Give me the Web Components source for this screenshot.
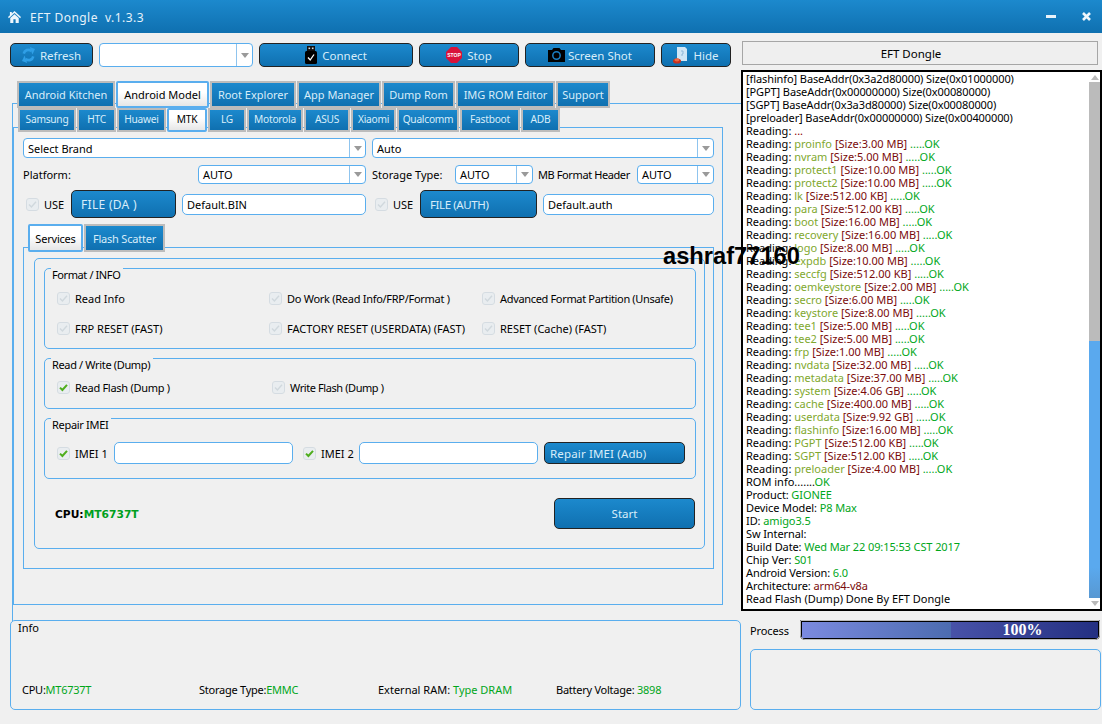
<!DOCTYPE html>
<html>
<head>
<meta charset="utf-8">
<title>EFT Dongle</title>
<style>
  html, body { margin: 0; padding: 0; background: #f0f0f0; }
  body { width: 1102px; height: 724px; overflow: hidden; font: 11px "Noto Sans", "Liberation Sans", sans-serif; color: #000; }
</style>
</head>
<body>
<eft-app></eft-app>
<script>
const BLUE = "#5aaeee";
const GRAD = "linear-gradient(#1c89cd, #0f70b0)";

class EftTitlebar extends HTMLElement {
  constructor() {
    super();
    this.attachShadow({ mode: "open" }).innerHTML = `
      <style>
        :host { display: flex; align-items: center; height: 33px; background: ${GRAD}; color: #e6f2fb; box-sizing: border-box; padding: 0 11px 0 8px; font-size: 12px; letter-spacing: .45px; }
        svg { display: block; }
        .title { margin: 2px 0 0 9px; flex: 1; white-space: pre; }
        .min { width: 10px; height: 3px; background: #e8f2fa; margin-right: 26px; margin-top: -1px; }
      </style>
      <svg width="13" height="12" viewBox="0 0 15 13" preserveAspectRatio="none"><path fill="#eef6fc" d="M7.5 0 L15 6.6 L14 7.8 L7.5 2.2 L1 7.8 L0 6.6 L2.2 4.7 V1 H4.4 V2.8 Z M2.6 7.6 L7.5 3.4 L12.4 7.6 V13 H8.8 V9 H6.2 V13 H2.6 Z"/></svg>
      <span class="title">EFT Dongle  v.1.3.3</span>
      <span class="min"></span>
      <svg width="9" height="9" viewBox="0 0 9 9"><path stroke="#eef6fc" stroke-width="2.6" d="M1 1 L8 8 M8 1 L1 8"/></svg>
    `;
  }
}

class EftButton extends HTMLElement {
  constructor() {
    super();
    const w = this.getAttribute("w");
    const h = this.getAttribute("h") || 24;
    const align = this.getAttribute("align") || "center";
    const pad = this.getAttribute("pad") || 0;
    const size = this.getAttribute("size") || 11.5;
    this.attachShadow({ mode: "open" }).innerHTML = `
      <style>
        :host { display: flex; align-items: center; justify-content: ${align}; gap: 5px; flex: none; width: ${w}px; height: ${h}px; box-sizing: border-box; padding-left: ${pad}px; border: 1px solid #222; border-radius: 5px; background: ${GRAD}; color: #d8edfa; font-size: ${size}px; }
        span { white-space: nowrap; }
      </style>
      <slot name="icon"></slot><span><slot></slot></span>
    `;
  }
}

class EftCombo extends HTMLElement {
  constructor() {
    super();
    const w = this.getAttribute("w");
    const h = this.getAttribute("h") || 20;
    this.attachShadow({ mode: "open" }).innerHTML = `
      <style>
        :host { display: flex; flex: none; width: ${w}px; height: ${h}px; box-sizing: border-box; border: 1px solid ${BLUE}; border-radius: 4px; background: #fff; }
        .text { flex: 1; padding-left: 4px; align-self: center; }
        .drop { width: 15px; border-left: 1px solid #8fc4ee; display: flex; align-items: center; justify-content: center; }
        .drop i { width: 0; height: 0; border: 4px solid transparent; border-top: 5px solid #9a9a9a; border-bottom: 0; }
      </style>
      <span class="text"><slot></slot></span>
      <span class="drop"><i></i></span>
    `;
  }
}

class EftInput extends HTMLElement {
  constructor() {
    super();
    const w = this.getAttribute("w");
    const h = this.getAttribute("h") || 21;
    this.attachShadow({ mode: "open" }).innerHTML = `
      <style>
        :host { display: flex; align-items: center; flex: none; width: ${w}px; height: ${h}px; box-sizing: border-box; padding-left: 4px; border: 1px solid ${BLUE}; border-radius: 5px; background: #fff; }
      </style>
      <span><slot></slot></span>
    `;
  }
}

class EftCheck extends HTMLElement {
  constructor() {
    super();
    const on = this.hasAttribute("checked");
    const w = this.getAttribute("w");
    const gap = this.getAttribute("gap") || 5;
    this.attachShadow({ mode: "open" }).innerHTML = `
      <style>
        :host { display: flex; align-items: center; gap: ${gap}px; ${w ? `width: ${w}px; flex: none;` : ""} }
        svg { display: block; flex: none; }
        span { white-space: nowrap; }
      </style>
      <svg width="13" height="13" viewBox="0 0 13 13">
        <rect x=".5" y=".5" width="12" height="12" rx="2.5" fill="#e9edf0" stroke="#d5dce2"/>
        <path d="M3 6.6 L5.4 9 L10 3.8" fill="none" stroke="${on ? "#4fae1e" : "#d0d8dd"}" stroke-width="${on ? 2 : 1.4}"/>
      </svg>
      <span><slot></slot></span>
    `;
  }
}

class EftTab extends HTMLElement {
  constructor() {
    super();
    const w = this.getAttribute("w");
    this.attachShadow({ mode: "open" }).innerHTML = `
      <style>
        :host { display: flex; align-items: center; justify-content: center; flex: none; width: ${w}px; box-sizing: border-box; border: 2px solid #bcbcbc; background: ${GRAD}; color: #d8edfa; }
        :host([active]) { border-color: ${BLUE}; background: linear-gradient(#fff 40%, #e6e6e6); color: #000; border-radius: 2px; }
        span { white-space: nowrap; }
      </style>
      <span><slot></slot></span>
    `;
  }
}

class EftTabBar extends HTMLElement {
  constructor() {
    super();
    const h = this.getAttribute("h");
    const left = this.getAttribute("left");
    this.attachShadow({ mode: "open" }).innerHTML = `
      <style>
        :host { display: flex; gap: 1px; height: ${h}px; margin-left: ${left}px; margin-bottom: -5px; position: relative; z-index: 1; }
      </style>
      <slot></slot>
    `;
  }
}

class EftGroup extends HTMLElement {
  constructor() {
    super();
    const h = this.getAttribute("h");
    const sp = this.getAttribute("sp") || "-.3";
    this.attachShadow({ mode: "open" }).innerHTML = `
      <style>
        :host { display: block; position: relative; height: ${h}px; box-sizing: border-box; border: 1px solid ${BLUE}; border-radius: 5px; }
        .title { position: absolute; left: 6px; top: -1px; padding: 0 3px 0 1px; line-height: 13px; background: #f0f0f0; letter-spacing: ${sp}px; }
      </style>
      <span class="title">${this.getAttribute("title")}</span>
      <slot></slot>
    `;
  }
}

class EftLog extends HTMLElement {
  constructor() {
    super();
    const parts = [
      ["proinfo", "3.00 MB"], ["nvram", "5.00 MB"], ["protect1", "10.00 MB"], ["protect2", "10.00 MB"],
      ["lk", "512.00 KB"], ["para", "512.00 KB"], ["boot", "16.00 MB"], ["recovery", "16.00 MB"],
      ["logo", "8.00 MB"], ["expdb", "10.00 MB"], ["seccfg", "512.00 KB"], ["oemkeystore", "2.00 MB"],
      ["secro", "6.00 MB"], ["keystore", "8.00 MB"], ["tee1", "5.00 MB"], ["tee2", "5.00 MB"],
      ["frp", "1.00 MB"], ["nvdata", "32.00 MB"], ["metadata", "37.00 MB"], ["system", "4.06 GB"],
      ["cache", "400.00 MB"], ["userdata", "9.92 GB"], ["flashinfo", "16.00 MB"], ["PGPT", "512.00 KB"],
      ["SGPT", "512.00 KB"], ["preloader", "4.00 MB"],
    ];
    const reading = parts.map(([name, size]) =>
      `<div>Reading: <b class="n">${name}</b> <b class="s">[Size:${size}]</b> <b class="g">.....OK</b></div>`).join("");
    const info = [
      ["Product: ", "GIONEE"], ["Device Model: ", "P8 Max"], ["ID: ", "amigo3.5"], ["Sw Internal:", ""],
      ["Build Date: ", "Wed Mar 22 09:15:53 CST 2017"], ["Chip Ver: ", "S01"], ["Android Version: ", "6.0"],
    ].map(([k, v]) => `<div class="t">${k}<b class="g">${v}</b></div>`).join("");
    this.attachShadow({ mode: "open" }).innerHTML = `
      <style>
        :host { display: flex; height: 541px; box-sizing: border-box; border: 2px solid #000; background: #fff; }
        .text { flex: 1; padding: 0 0 0 3px; line-height: 13px; white-space: pre; overflow: hidden; }
        .t { letter-spacing: -.1px; }
        b { font-weight: normal; }
        .n { color: #7fa82e; }
        .s { color: #7a0a0a; }
        .g { color: #00a61a; }
        .r { color: #8a0000; }
        .bar { width: 11px; display: flex; flex-direction: column; align-items: center; }
        .bar i.up, .bar i.down { width: 0; height: 0; border: 4px solid transparent; flex: none; }
        .bar i.up { border-bottom: 5px solid #b9b9b9; border-top: 0; margin: 3px 0 2px; }
        .bar i.down { border-top: 5px solid #b9b9b9; border-bottom: 0; margin: 3px 0 2px; }
        .gray { height: 259px; width: 100%; background: #bbbbbb; flex: none; }
        .thumb { height: 257px; width: 100%; background: linear-gradient(#5aa9ee, #5aa9ee 88%, #5898d2); flex: none; }
      </style>
      <div class="text"><div class="t">[flashinfo] BaseAddr(0x3a2d80000) Size(0x01000000)</div><div class="t">[PGPT] BaseAddr(0x00000000) Size(0x00080000)</div><div class="t">[SGPT] BaseAddr(0x3a3d80000) Size(0x00080000)</div><div class="t">[preloader] BaseAddr(0x00000000) Size(0x00400000)</div><div>Reading: <b class="r">...</b></div>${reading}<div>ROM info.......<b class="g">OK</b></div>${info}<div class="t">Architecture: <b class="s">arm64-v8a</b></div><div>Read Flash (Dump) Done By EFT Dongle</div></div>
      <div class="bar"><i class="up"></i><div class="gray"></div><div class="thumb"></div><i class="down"></i></div>
    `;
  }
}

class EftProgress extends HTMLElement {
  constructor() {
    super();
    this.attachShadow({ mode: "open" }).innerHTML = `
      <style>
        :host { display: flex; flex: 1; height: 20px; box-sizing: border-box; border: 2px solid #000; outline: 1px solid #bbb; outline-offset: -1px; border-radius: 1px 1px 5px 5px; color: #fff; font: bold 16px "Liberation Serif", serif; }
        .a { width: 149px; flex: none; background: linear-gradient(90deg, #7b8adf, #4c6cb0); }
        .b { flex: 1; padding-right: 4px; background: linear-gradient(90deg, #4852a8, #243082); text-align: center; line-height: 16px; }
      </style>
      <div class="a"></div><div class="b"><slot></slot></div>
    `;
  }
}

class EftApp extends HTMLElement {
  constructor() {
    super();
    this.attachShadow({ mode: "open" }).innerHTML = `
      <style>
        :host { display: block; position: relative; width: 1102px; height: 724px; }
        .main { display: flex; }
        .left { width: 731px; flex: none; padding: 10px 0 0 10px; }
        .right { flex: 1; padding-top: 8px; }
        .toolbar { display: flex; gap: 6px; margin-bottom: 14px; }
        .pane { box-sizing: border-box; border: 1px solid ${BLUE}; }
        .android { margin-left: 2px; }
        .androidPane { height: 518px; border-right: 0; border-bottom: 0; padding-top: 4px; }
        .subtabs { font-size: 10.2px; letter-spacing: -.25px; }
        .subtabs eft-tab { padding-bottom: 2px; }
        .svctabs { letter-spacing: -.2px; }
        .mtk { width: 710px; height: 478px; }
        .row { display: flex; align-items: center; }
        .r1 { gap: 6px; margin: 10px 0 0 9px; }
        .r2 { margin: 7px 0 0 9px; }
        .r3 { height: 28px; margin: 6px 0 6px 12px; }
        .services { width: 691px; height: 322px; margin-left: 9px; }
        .round { width: 671px; height: 291px; margin: 10px 0 0 10px; box-sizing: border-box; border: 1px solid ${BLUE}; border-radius: 5px; padding: 9px 0 0 9px; }
        .stack { display: flex; flex-direction: column; gap: 9px; width: 652px; }
        .cols { display: grid; grid-template-columns: 212px 213px 213px; grid-auto-rows: 30px; align-items: center; padding: 14px 0 0 12px; }
        .cols.two { grid-template-columns: 215px 215px; padding-top: 13px; }
        .imei { height: 22px; padding: 23px 0 0 12px; }
        .bottom { display: flex; align-items: center; justify-content: space-between; width: 651px; padding-left: 11px; box-sizing: border-box; margin-top: 19px; }
        .cpu { font: bold 10.7px "DejaVu Sans", sans-serif; margin-top: 1px; }
        .g { color: #00a61a; }
        .cpu .g { color: #00a020; }
        .info { position: relative; height: 90px; margin-top: -1px; box-sizing: border-box; border: 1px solid ${BLUE}; border-radius: 5px; background: #f0f0f0; display: flex; flex-direction: column; justify-content: space-between; }
        .info .t { padding: 0 0 0 7px; line-height: 13px; }
        .stats { display: grid; grid-template-columns: 177px 179px 178px 1fr; padding: 0 0 13px 11px; line-height: 13px; letter-spacing: -.25px; }
        .stats .ext { letter-spacing: 0; }
        .top { width: 356px; height: 24px; margin-left: 1px; box-sizing: border-box; padding-right: 18px; border: 1px solid #a6a6a6; background: #efefef; display: flex; align-items: center; justify-content: center; font-size: 11.5px; }
        .logwrap { margin-top: 5px; }
        .proc { display: flex; align-items: center; height: 20px; margin: 9px 2px 0 9px; }
        .proc span { width: 50px; flex: none; letter-spacing: -.1px; }
        .box { height: 61px; margin: 9px 1px 0 9px; box-sizing: border-box; border: 1px solid ${BLUE}; border-radius: 5px; }
        .mark { position: absolute; left: 663px; top: 243px; font: bold 23.7px/27px "Liberation Sans", sans-serif; color: #000; z-index: 5; white-space: pre; }
        svg { display: block; }
      </style>
      <eft-titlebar></eft-titlebar>
      <div class="main">
        <div class="left">
          <div class="toolbar">
            <eft-button w="83">
              <svg slot="icon" width="13" height="16" viewBox="0 0 15 17" preserveAspectRatio="none" fill="none" stroke="#2f9fe6" stroke-width="3"><path d="M2 7 C3 3 7 2 11 4"/><path fill="#2f9fe6" stroke="none" d="M9 0 L15 2 L12 8 Z"/><path d="M13 10 C12 14 8 15 4 13"/><path fill="#2f9fe6" stroke="none" d="M6 17 L0 15 L3 9 Z"/></svg>
              Refresh
            </eft-button>
            <eft-combo w="154" h="24"></eft-combo>
            <eft-button w="154">
              <svg slot="icon" width="12" height="18" viewBox="0 0 12 18"><rect x="2" y="0" width="8" height="6" fill="#111"/><rect x="3.5" y="1.5" width="1.6" height="1.6" fill="#ddd"/><rect x="6.9" y="1.5" width="1.6" height="1.6" fill="#ddd"/><rect x="0" y="5" width="12" height="13" rx="1.5" fill="#000"/><path d="M3 11.5 L5.2 14 L9 8.5" stroke="#fff" stroke-width="1.3" fill="none"/></svg>
              Connect
            </eft-button>
            <eft-button w="100">
              <svg slot="icon" width="16" height="16" viewBox="0 0 16 16"><path fill="#d9123a" d="M5 0 H11 L16 5 V11 L11 16 H5 L0 11 V5 Z"/><text x="8" y="10" text-anchor="middle" font-family="Liberation Sans" font-weight="bold" font-size="5" fill="#fff">STOP</text></svg>
              Stop
            </eft-button>
            <eft-button w="130">
              <svg slot="icon" width="17" height="14" viewBox="0 0 17 14" style="margin-right:-2px"><path fill="#000" d="M5.5 0 H11.5 L13 2 H17 V14 H0 V2 H4 Z"/><circle cx="8.5" cy="7.5" r="3.7" fill="none" stroke="#1a7fc2" stroke-width="1.5"/></svg>
              Screen Shot
            </eft-button>
            <eft-button w="70">
              <svg slot="icon" width="15" height="17" viewBox="0 0 15 17"><path fill="#cfe6f6" d="M4 0 H12 L14 2 V14 H4 Z"/><path stroke="#8fb8d8" stroke-width="1" fill="none" d="M8 4 H10 V7 H9 V9"/><ellipse cx="4" cy="14" rx="4" ry="2.6" fill="#c9301e"/><ellipse cx="4" cy="12.8" rx="2.6" ry="1.6" fill="#ee6a45"/></svg>
              Hide
            </eft-button>
          </div>
          <div class="android">
            <eft-tab-bar h="27" left="5">
              <eft-tab w="98">Android Kitchen</eft-tab><eft-tab w="93" active>Android Model</eft-tab><eft-tab w="86">Root Explorer</eft-tab><eft-tab w="84">App Manager</eft-tab><eft-tab w="73">Dump Rom</eft-tab><eft-tab w="99">IMG ROM Editor</eft-tab><eft-tab w="54">Support</eft-tab>
            </eft-tab-bar>
            <div class="pane androidPane">
              <eft-tab-bar class="subtabs" h="24" left="5">
                <eft-tab w="58">Samsung</eft-tab><eft-tab w="39">HTC</eft-tab><eft-tab w="49">Huawei</eft-tab><eft-tab w="40" active>MTK</eft-tab><eft-tab w="38">LG</eft-tab><eft-tab w="56">Motorola</eft-tab><eft-tab w="46">ASUS</eft-tab><eft-tab w="45">Xiaomi</eft-tab><eft-tab w="62">Qualcomm</eft-tab><eft-tab w="60">Fastboot</eft-tab><eft-tab w="39">ADB</eft-tab>
              </eft-tab-bar>
              <div class="pane mtk">
                <div class="row r1"><eft-combo w="343">Select Brand</eft-combo><eft-combo w="342">Auto</eft-combo></div>
                <div class="row r2">
                  <span style="width:175px">Platform:</span><eft-combo w="168" h="19">AUTO</eft-combo>
                  <span style="width:83px;margin-left:6px">Storage Type:</span><eft-combo w="78" h="19">AUTO</eft-combo>
                  <span style="width:99px;margin-left:5px;letter-spacing:-.4px;white-space:nowrap">MB Format Header</span><eft-combo w="77" h="19">AUTO</eft-combo>
                </div>
                <div class="row r3">
                  <eft-check w="45">USE</eft-check>
                  <eft-button w="105" h="28" size="12" align="flex-start" pad="9" style="letter-spacing:.3px">FILE (DA )</eft-button>
                  <eft-input w="184" style="margin-left:6px">Default.BIN</eft-input>
                  <eft-check w="45" style="margin-left:9px">USE</eft-check>
                  <eft-button w="117" h="28" align="flex-start" pad="9" style="letter-spacing:-.4px">FILE (AUTH)</eft-button>
                  <eft-input w="171" style="margin-left:6px">Default.auth</eft-input>
                </div>
                <eft-tab-bar class="svctabs" h="28" left="14"><eft-tab w="55" active>Services</eft-tab><eft-tab w="81">Flash Scatter</eft-tab></eft-tab-bar>
                <div class="pane services">
                  <div class="round">
                    <div class="stack">
                      <eft-group title="Format / INFO" h="81" sp="-.4">
                        <div class="cols">
                          <eft-check>Read Info</eft-check><eft-check style="letter-spacing:-.28px">Do Work (Read Info/FRP/Format )</eft-check><eft-check style="letter-spacing:-.33px">Advanced Format Partition (Unsafe)</eft-check>
                          <eft-check>FRP RESET (FAST)</eft-check><eft-check>FACTORY RESET (USERDATA) (FAST)</eft-check><eft-check>RESET (Cache) (FAST)</eft-check>
                        </div>
                      </eft-group>
                      <eft-group title="Read / Write (Dump)" h="51" sp="-.35">
                        <div class="cols two"><eft-check checked style="letter-spacing:-.28px">Read Flash (Dump )</eft-check><eft-check style="letter-spacing:-.42px">Write Flash (Dump )</eft-check></div>
                      </eft-group>
                      <eft-group title="Repair IMEI" h="61">
                        <div class="row imei">
                          <eft-check checked w="57">IMEI 1</eft-check><eft-input w="179" h="22"></eft-input>
                          <eft-check checked w="56" style="margin-left:10px">IMEI 2</eft-check><eft-input w="179" h="22"></eft-input>
                          <eft-button w="141" h="22" align="flex-start" pad="5" style="margin-left:6px;letter-spacing:.15px">Repair IMEI (Adb)</eft-button>
                        </div>
                      </eft-group>
                    </div>
                    <div class="bottom">
                      <span class="cpu">CPU:<span class="g">MT6737T</span></span>
                      <eft-button w="141" h="31">Start</eft-button>
                    </div>
                  </div>
                </div>
              </div>
            </div>
          </div>
          <div class="info">
            <div class="t">Info</div>
            <div class="stats">
              <span>CPU:<span class="g">MT6737T</span></span>
              <span>Storage Type:<span class="g">EMMC</span></span>
              <span class="ext">External RAM: <span class="g">Type DRAM</span></span>
              <span>Battery Voltage: <span class="g">3898</span></span>
            </div>
          </div>
        </div>
        <div class="right">
          <div class="top">EFT Dongle</div>
          <div class="logwrap"><eft-log></eft-log></div>
          <div class="proc"><span>Process</span><eft-progress>100%</eft-progress></div>
          <div class="box"></div>
        </div>
      </div>
      <div class="mark">ashraf77160</div>
    `;
  }
}

customElements.define("eft-titlebar", EftTitlebar);
customElements.define("eft-button", EftButton);
customElements.define("eft-combo", EftCombo);
customElements.define("eft-input", EftInput);
customElements.define("eft-check", EftCheck);
customElements.define("eft-tab", EftTab);
customElements.define("eft-tab-bar", EftTabBar);
customElements.define("eft-group", EftGroup);
customElements.define("eft-log", EftLog);
customElements.define("eft-progress", EftProgress);
customElements.define("eft-app", EftApp);
</script>
</body>
</html>
